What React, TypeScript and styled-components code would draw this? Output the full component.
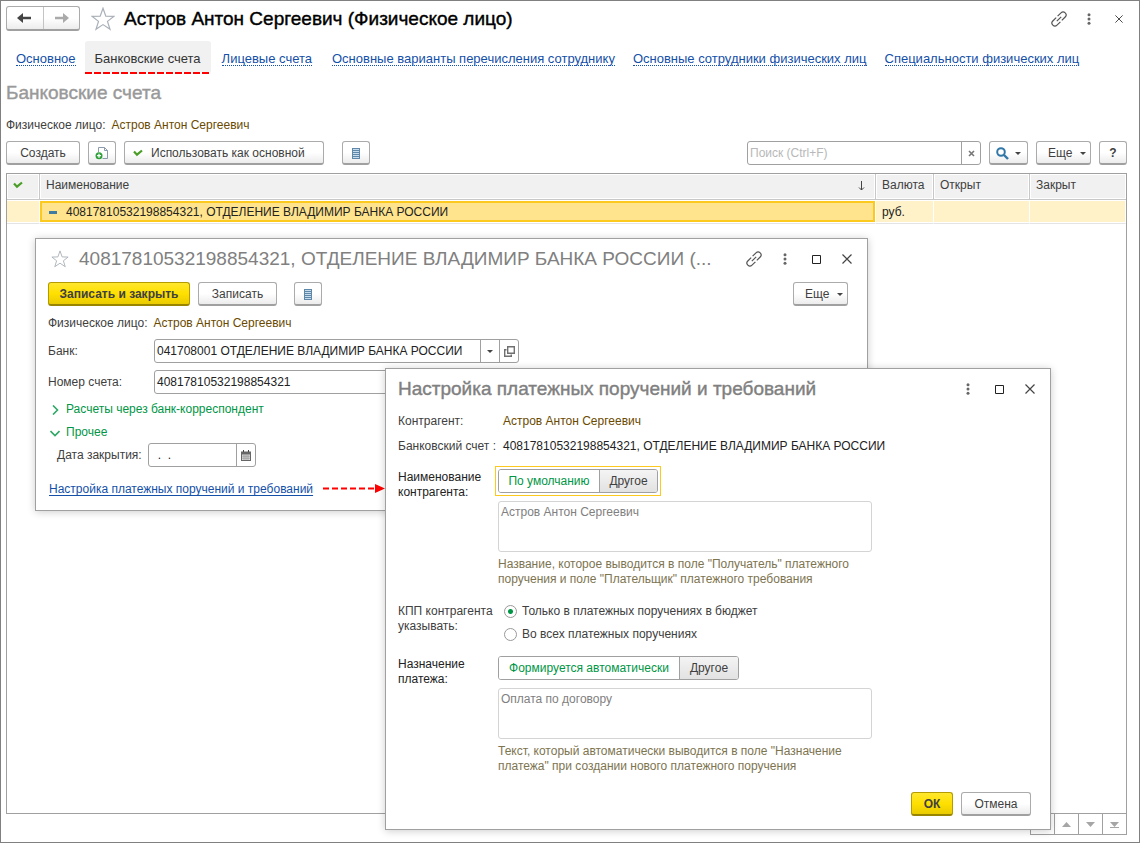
import React, { useState } from 'react';
import styled, { createGlobalStyle, css } from 'styled-components';

const GlobalStyle = createGlobalStyle`
  *, *::before, *::after { box-sizing: border-box; }
  body { margin: 0; background: #fff; }
  body, button, input, textarea {
    font-family: "Liberation Sans", Arial, sans-serif;
    font-size: 12px;
    line-height: 15px;
    color: #404040;
  }
  h1, h2 { margin: 0; font-weight: 400; }
`;

const Page = styled.main`
  position: relative;
  display: flex;
  flex-direction: column;
  min-height: 100vh;
  padding: 5px 12px 7px 5px;
  border: 1px solid #808080;
`;

const Header = styled.header`
  display: flex;
  align-items: center;
  height: 25px;
  margin-right: -4px;
`;

const NavButtons = styled.div`
  display: flex;
  width: 74px;
  height: 25px;
  border: 1px solid #ababab;
  border-bottom: 2px solid #a0a0a0;
  border-radius: 3px;
  background: linear-gradient(#fff 50%, #ececec);
`;

const NavButton = styled.button`
  flex: 1;
  display: flex;
  align-items: center;
  justify-content: center;
  padding: 0;
  border: 0;
  background: none;
  & + & { border-left: 1px solid #c4c4c4; }
`;

const IconButton = styled.button`
  display: flex;
  align-items: center;
  justify-content: center;
  flex: none;
  width: 24px;
  height: 24px;
  padding: 0;
  border: 0;
  background: none;
`;

const PageTitle = styled.h1`
  flex: 1;
  margin-left: 9px;
  font-size: 19px;
  line-height: 24px;
  color: #000;
  -webkit-text-stroke: 0.4px #000;
`;

const WindowTools = styled.div<{ $gap?: number }>`
  display: flex;
  gap: ${(p) => p.$gap ?? 7}px;
`;

const Tabs = styled.nav`
  display: flex;
  align-items: flex-start;
  height: 33px;
  margin-top: 10px;
  padding-left: 10px;
  white-space: nowrap;
`;

const TabLink = styled.a<{ $gap: number }>`
  margin: 11px ${(p) => p.$gap}px 0 0;
  border-bottom: 1px dotted #1450a8;
  font-size: 13px;
  line-height: 13px;
  color: #1450a8;
  text-decoration: none;
`;

const ActiveTab = styled.a`
  height: 33px;
  margin-right: 11px;
  padding: 10px 10px 0;
  border-radius: 3px 3px 0 0;
  background: repeating-linear-gradient(90deg, #f00 0 7px, #fff 7px 9px) bottom / 100% 2px no-repeat, #f1f1f1;
  font-size: 13px;
  color: #333;
  text-decoration: none;
`;

const Section = styled.h2`
  margin-top: 7px;
  font-size: 19px;
  line-height: 24px;
  color: #999;
  -webkit-text-stroke: 0.4px #999;
`;

const Line = styled.div<{ $top?: number }>`
  display: flex;
  gap: 6px;
  margin-top: ${(p) => p.$top ?? 0}px;
`;

const Value = styled.span<{ $dark?: boolean }>`
  color: ${(p) => (p.$dark ? '#222' : '#6b4a00')};
`;

const Toolbar = styled.div<{ $top: number }>`
  display: flex;
  gap: 8px;
  margin-top: ${(p) => p.$top}px;
`;

const Button = styled.button<{ $w?: number; $left?: number; $primary?: boolean }>`
  display: flex;
  flex: none;
  align-items: center;
  justify-content: ${(p) => (p.$left ? 'flex-start' : 'center')};
  gap: ${(p) => (p.$left ? 8 : 6)}px;
  width: ${(p) => p.$w ?? 28}px;
  height: 24px;
  padding: 1px 0 0 ${(p) => p.$left ?? 0}px;
  border: 1px solid #ababab;
  border-bottom: 2px solid #a0a0a0;
  border-radius: 3px;
  background: linear-gradient(#fff 50%, #ececec);
  white-space: nowrap;
  ${(p) =>
    p.$primary &&
    css`
      border-color: #b39b00;
      border-bottom-color: #998500;
      background: linear-gradient(#ffe72e, #ffe000 50%, #eacb00);
      font-weight: 700;
    `}
`;

const Spacer = styled.div<{ $w?: number }>`
  flex: ${(p) => (p.$w ? `0 0 ${p.$w}px` : '1')};
`;

const Field = styled.div<{ $w?: number }>`
  display: flex;
  width: ${(p) => (p.$w ? `${p.$w}px` : 'auto')};
  height: 24px;
  border: 1px solid #a0a0a0;
  border-radius: 3px;
  background: #fff;
  overflow: hidden;
`;

const TextInput = styled.input`
  flex: 1;
  min-width: 0;
  padding: 0 2px;
  border: 0;
  outline: 0;
  background: none;
  color: #222;
  &::placeholder { color: #b8b8b8; opacity: 1; }
`;

const FieldButton = styled.button`
  display: flex;
  align-items: center;
  justify-content: center;
  flex: none;
  width: 19px;
  padding: 0;
  border: 0;
  border-left: 1px solid #a0a0a0;
  background: none;
`;

const ListPanel = styled.section`
  flex: 1;
  margin-top: 8px;
  border: 1px solid #a0a0a0;
`;

const Table = styled.table`
  width: 100%;
  table-layout: fixed;
  border-collapse: separate;
  border-spacing: 0;
`;

const Th = styled.th<{ $w?: number }>`
  width: ${(p) => (p.$w ? `${p.$w}px` : 'auto')};
  height: 26px;
  padding: 0 6px 2px;
  border: 0 solid #c8c8c8;
  border-width: 0 1px 1px 0;
  background: #f1f1f1;
  box-shadow: inset 0 0 0 1px #fff;
  font-weight: 400;
  text-align: left;
  &:last-child { border-right: 0; }
`;

const HeadRow = styled.span`
  display: flex;
  align-items: center;
  justify-content: space-between;
  padding-right: 4px;
`;

const Td = styled.td<{ $active?: boolean }>`
  height: 24px;
  padding: 0 6px;
  border: 0 solid #fff;
  border-width: 1px 1px 1px 0;
  border-bottom-color: #e4e4e4;
  background: #fff2c8;
  box-shadow: inset 0 -1px #fff;
  color: #222;
  ${(p) =>
    p.$active &&
    css`
      background: #ffe48d;
      box-shadow: inset 0 -1px #fff, inset 0 -3px #fcc91f, inset 0 0 0 2px #fcc91f;
      padding-left: 9px;
    `}
`;

const RowName = styled.span`
  display: flex;
  align-items: center;
  gap: 9px;
`;

const Pager = styled.div`
  display: flex;
  align-self: flex-end;
  border: 1px solid #a0a0a0;
  border-top: 0;
`;

const PagerButton = styled.button`
  display: flex;
  align-items: center;
  justify-content: center;
  width: 24px;
  height: 20px;
  padding: 0;
  border: 0;
  background: #fff;
  &:first-child { width: 23px; }
  & + & { border-left: 1px solid #a0a0a0; }
`;

const Dialog = styled.section<{ $x: number; $y: number; $w: number }>`
  position: absolute;
  left: ${(p) => p.$x}px;
  top: ${(p) => p.$y}px;
  width: ${(p) => p.$w}px;
  padding: 8px 8px 13px 12px;
  border: 1px solid #a0a0a0;
  background: #fff;
  box-shadow: 0 1px 8px rgba(0, 0, 0, 0.2);
`;

const DialogHead = styled.header`
  display: flex;
  align-items: center;
  height: 24px;
`;

const DialogTitle = styled.h2<{ $bold?: boolean }>`
  flex: 1;
  min-width: 0;
  white-space: nowrap;
  font-size: 19px;
  line-height: 24px;
  color: #808080;
  ${(p) => p.$bold && css`-webkit-text-stroke: 0.4px #808080;`}
`;

const FormRow = styled.div<{ $top: number; $label: number; $center?: boolean }>`
  display: grid;
  grid-template-columns: ${(p) => p.$label}px 1fr;
  align-items: ${(p) => (p.$center ? 'center' : 'start')};
  margin-top: ${(p) => p.$top}px;
`;

const Label = styled.label<{ $dark?: boolean }>`
  ${(p) => p.$dark && css`padding-top: 1px; color: #222;`}
`;

const GroupToggle = styled.button`
  display: flex;
  align-items: center;
  gap: 6px;
  margin-top: 8px;
  padding: 0 0 0 2px;
  border: 0;
  background: none;
  color: #009646;
`;

const SettingsRow = styled.div`
  display: flex;
  align-items: center;
  justify-content: space-between;
  width: 336px;
  margin: 15px 0 0 1px;
`;

const SettingsLink = styled.a`
  color: #1450a8;
  text-underline-offset: 2px;
  white-space: nowrap;
`;

const FocusFrame = styled.div`
  width: fit-content;
  margin: -3px;
  padding: 2px;
  border: 1px solid #fcc91f;
`;

const Segments = styled.div`
  display: flex;
  width: fit-content;
  height: 24px;
  border: 1px solid #a0a0a0;
  border-radius: 3px;
`;

const Segment = styled.button<{ $w: number; $on?: boolean }>`
  width: ${(p) => p.$w}px;
  padding: 0;
  border: 0;
  border-radius: 2px;
  white-space: nowrap;
  background: ${(p) => (p.$on ? '#fff' : 'linear-gradient(#f4f4f4, #e2e2e2)')};
  color: ${(p) => (p.$on ? '#009646' : '#404040')};
  & + & { border-left: 1px solid #a0a0a0; border-radius: 0 2px 2px 0; }
`;

const Area = styled.textarea`
  display: block;
  width: 374px;
  height: 51px;
  margin-top: 8px;
  padding: 3px 2px;
  border: 1px solid #d4d4d4;
  border-radius: 3px;
  outline: 0;
  resize: none;
  color: #808080;
`;

const Hint = styled.p`
  width: 374px;
  margin: 5px 0 0;
  color: #7d7450;
`;

const RadioLabel = styled.label`
  display: flex;
  align-items: center;
  gap: 5px;
  height: 15px;
  margin: 0 0 8px 6px;
`;

const Radio = styled.input`
  appearance: none;
  width: 13px;
  height: 13px;
  margin: 0;
  border: 1px solid #999;
  border-radius: 50%;
  background: #fff;
  &:checked { background: radial-gradient(circle, #009646 0 2px, #fff 3px); }
`;

const Footer = styled.footer`
  display: flex;
  justify-content: flex-end;
  gap: 8px;
  margin-top: 18px;
`;

const Star = ({ size }: { size: number }) => (
  <svg width={size} height={size} viewBox="0 0 24 24" fill="none" stroke="#a9b0b8" strokeWidth="1.2">
    <path d="M12 1.200l2.800 8 8 .2-6.300 5 2.500 7.900L12 17.600l-7 4.700 2.500-7.900-6.300-5 8-.2z" />
  </svg>
);

const NavArrow = ({ color, flip }: { color: string; flip?: boolean }) => (
  <svg width="15" height="12" viewBox="0 0 15 12">
    <path d={flip ? 'M15 6L9 1v10z' : 'M0 6l6-5v10z'} fill={color} />
    <path d={flip ? 'M1 6h9' : 'M5 6h9'} stroke={color} strokeWidth="2.500" />
  </svg>
);

const LinkIcon = () => (
  <svg width="16" height="16" viewBox="0 0 16 16" fill="none" stroke="#555" strokeWidth="1.200">
    <path d="M6.600 5.200L10 1.800a2.970 2.970 0 0 1 4.200 4.200L10.800 9.400" />
    <path d="M9.400 10.800L6 14.200a2.970 2.970 0 0 1-4.200-4.200L5.200 6.600" />
    <path d="M5.800 10.200l4.400-4.400" />
  </svg>
);

const DotsIcon = () => (
  <svg width="4" height="12" viewBox="0 0 4 12" fill="#666">
    <circle cx="2" cy="1.700" r="1.500" />
    <circle cx="2" cy="6" r="1.500" />
    <circle cx="2" cy="10.300" r="1.500" />
  </svg>
);

const CloseIcon = ({ size }: { size: number }) => (
  <svg width={size} height={size} viewBox="0 0 10 10" stroke="#444" strokeWidth="1.200">
    <path d="M.5.5l9 9M9.500.5l-9 9" />
  </svg>
);

const ClearIcon = () => (
  <svg width="7" height="7" viewBox="0 0 7 7" stroke="#777" strokeWidth="1.600">
    <path d="M1 1l5 5M6 1L1 6" />
  </svg>
);

const SquareIcon = () => (
  <svg width="9" height="9" viewBox="0 0 9 9" fill="none" stroke="#222">
    <path d="M.5.500h8v8h-8z" />
  </svg>
);

const CheckIcon = () => (
  <svg width="10" height="8" viewBox="0 0 10 8" fill="none" stroke="#4a9e28" strokeWidth="2.200">
    <path d="M1 2.500l3 3.200L9 1.500" />
  </svg>
);

const ListIcon = () => (
  <svg width="8" height="11" viewBox="0 0 8 11">
    <path d="M0 0h8v11H0z" fill="#5f87a8" />
    <path d="M1 1.500h6M1 3.500h6M1 5.500h6M1 7.500h6M1 9.500h6" stroke="#c7dcec" />
  </svg>
);

const CopyDocIcon = () => (
  <svg width="14" height="14" viewBox="0 0 14 14" fill="none">
    <path d="M3.500 6V1.500h6l3 3v8H7.500" stroke="#8b9bab" />
    <path d="M9.500 1.500v3h3" stroke="#8b9bab" />
    <circle cx="4" cy="9.700" r="3.500" fill="#2fa03a" />
    <path d="M4 7.700v4M2 9.700h4" stroke="#fff" strokeWidth="1.300" />
  </svg>
);

const Caret = () => (
  <svg width="6" height="3" viewBox="0 0 6 3" fill="#444">
    <path d="M0 0h6L3 3z" />
  </svg>
);

const PagerIcon = ({ up, bar }: { up?: boolean; bar?: boolean }) => (
  <svg width="9" height="7" viewBox="0 0 9 7" fill="#a6a6a6">
    <path d={up ? 'M0 6l4.500-5L9 6z' : 'M0 1h9L4.500 6z'} />
    {bar && <path d={up ? 'M0 0h9v1H0z' : 'M0 6h9v1H0z'} />}
  </svg>
);

const SearchIcon = () => (
  <svg width="13" height="13" viewBox="0 0 13 13" fill="none" stroke="#3178a8">
    <circle cx="5" cy="5" r="3.800" strokeWidth="2" />
    <path d="M8 8l4 4" strokeWidth="2.400" />
  </svg>
);

const SortIcon = () => (
  <svg width="7" height="10" viewBox="0 0 7 10" fill="none" stroke="#444">
    <path d="M3.500 0v9M1 6.500L3.500 9 6 6.500" />
  </svg>
);

const OpenIcon = () => (
  <svg width="11" height="11" viewBox="0 0 11 11" fill="none" stroke="#707070" strokeWidth="1.400">
    <path d="M3.700 .7h6.600v6.600H3.700zM2.500 3.700H.7v6.600h6.600V8.500" />
  </svg>
);

const CalendarIcon = () => (
  <svg width="10" height="11" viewBox="0 0 10 11">
    <path d="M0 1.500h10V11H0z" fill="#666" />
    <path d="M2 0h1v2H2zM7 0h1v2H7z" fill="#444" />
    <path d="M1 4.500h8V10H1z" fill="#ddd" />
    <path d="M1 6.200h8M1 8.200h8M3 4.500V10M5 4.500V10M7 4.500V10" stroke="#888" strokeWidth=".6" />
  </svg>
);

const Chevron = ({ down }: { down?: boolean }) => (
  <svg width="10" height="10" viewBox="0 0 10 10" fill="none" stroke="#2fa866" strokeWidth="1.600">
    <path d={down ? 'M.5 3L5 7.500 9.500 3' : 'M3 .5L7.500 5 3 9.500'} />
  </svg>
);

const DashedArrow = () => (
  <svg width="62" height="11" viewBox="0 0 62 11">
    <path d="M0 4.500h53" stroke="#f00" strokeWidth="2" strokeDasharray="6 3" />
    <path d="M52 0l10 4.500L52 9z" fill="#f00" />
  </svg>
);

const MoreButton = () => (
  <Button $w={55} $left={11}>
    Еще
    <Caret />
  </Button>
);

export default function App() {
  const [kpp, setKpp] = useState('budget');
  const account = '40817810532198854321, ОТДЕЛЕНИЕ ВЛАДИМИР БАНКА РОССИИ';

  return (
    <>
      <GlobalStyle />
      <Page>
        <Header>
          <NavButtons>
            <NavButton aria-label="Назад"><NavArrow color="#444" /></NavButton>
            <NavButton aria-label="Вперед"><NavArrow color="#aaa" flip /></NavButton>
          </NavButtons>
          <Spacer $w={11} />
          <IconButton aria-label="В избранное"><Star size={24} /></IconButton>
          <PageTitle>Астров Антон Сергеевич (Физическое лицо)</PageTitle>
          <WindowTools $gap={6}>
            <IconButton aria-label="Ссылка"><LinkIcon /></IconButton>
            <IconButton aria-label="Меню"><DotsIcon /></IconButton>
            <IconButton aria-label="Закрыть"><CloseIcon size={8} /></IconButton>
          </WindowTools>
        </Header>

        <Tabs>
          <TabLink href="#main" $gap={9}>Основное</TabLink>
          <ActiveTab href="#accounts">Банковские счета</ActiveTab>
          <TabLink href="#personal" $gap={20}>Лицевые счета</TabLink>
          <TabLink href="#transfer" $gap={18}>Основные варианты перечисления сотруднику</TabLink>
          <TabLink href="#staff" $gap={18}>Основные сотрудники физических лиц</TabLink>
          <TabLink href="#skills" $gap={0}>Специальности физических лиц</TabLink>
        </Tabs>

        <Section>Банковские счета</Section>
        <Line $top={13}>
          <span>Физическое лицо:</span>
          <Value>Астров Антон Сергеевич</Value>
        </Line>

        <Toolbar $top={8}>
          <Button $w={74}>Создать</Button>
          <Button aria-label="Скопировать"><CopyDocIcon /></Button>
          <Button $w={200} $left={8}><CheckIcon />Использовать как основной</Button>
          <Spacer $w={2} />
          <Button aria-label="Список"><ListIcon /></Button>
          <Spacer />
          <Field $w={234}>
            <TextInput aria-label="Поиск" placeholder="Поиск (Ctrl+F)" />
            <FieldButton aria-label="Очистить"><ClearIcon /></FieldButton>
          </Field>
          <Button $w={39} aria-label="Найти"><SearchIcon /><Caret /></Button>
          <MoreButton />
          <Button><b>?</b></Button>
        </Toolbar>

        <ListPanel>
          <Table>
            <thead>
              <tr>
                <Th $w={33} aria-label="Основной"><CheckIcon /></Th>
                <Th><HeadRow>Наименование <SortIcon /></HeadRow></Th>
                <Th $w={58}>Валюта</Th>
                <Th $w={96}>Открыт</Th>
                <Th $w={96}>Закрыт</Th>
              </tr>
            </thead>
            <tbody>
              <tr>
                <Td />
                <Td $active>
                  <RowName>
                    <svg width="8" height="3" viewBox="0 0 8 3"><path d="M0 0h8v3H0z" fill="#3f7ba0" /></svg>
                    {account}
                  </RowName>
                </Td>
                <Td>руб.</Td>
                <Td />
                <Td />
              </tr>
            </tbody>
          </Table>
        </ListPanel>
        <Pager>
          <PagerButton aria-label="В начало"><PagerIcon up bar /></PagerButton>
          <PagerButton aria-label="Вверх"><PagerIcon up /></PagerButton>
          <PagerButton aria-label="Вниз"><PagerIcon /></PagerButton>
          <PagerButton aria-label="В конец"><PagerIcon bar /></PagerButton>
        </Pager>

        <Dialog $x={34} $y={237} $w={833}>
          <DialogHead>
            <IconButton aria-label="В избранное"><Star size={18} /></IconButton>
            <Spacer $w={7} />
            <DialogTitle>{account} (...</DialogTitle>
            <WindowTools>
              <IconButton aria-label="Ссылка"><LinkIcon /></IconButton>
              <IconButton aria-label="Меню"><DotsIcon /></IconButton>
              <IconButton aria-label="Развернуть"><SquareIcon /></IconButton>
              <IconButton aria-label="Закрыть"><CloseIcon size={10} /></IconButton>
            </WindowTools>
          </DialogHead>
          <Toolbar $top={11}>
            <Button $w={142} $primary>Записать и закрыть</Button>
            <Button $w={79}>Записать</Button>
            <Spacer $w={1} />
            <Button aria-label="Список"><ListIcon /></Button>
            <Spacer />
            <MoreButton />
            <Spacer $w={3} />
          </Toolbar>
          <Line $top={10}>
            <span>Физическое лицо:</span>
            <Value>Астров Антон Сергеевич</Value>
          </Line>
          <FormRow $top={8} $label={106} $center>
            <Label htmlFor="bank">Банк:</Label>
            <Field $w={365}>
              <TextInput id="bank" defaultValue="041708001 ОТДЕЛЕНИЕ ВЛАДИМИР БАНКА РОССИИ" />
              <FieldButton aria-label="Выбрать"><Caret /></FieldButton>
              <FieldButton aria-label="Открыть"><OpenIcon /></FieldButton>
            </Field>
          </FormRow>
          <FormRow $top={7} $label={106} $center>
            <Label htmlFor="number">Номер счета:</Label>
            <Field $w={365}>
              <TextInput id="number" defaultValue="40817810532198854321" />
            </Field>
          </FormRow>
          <GroupToggle><Chevron />Расчеты через банк-корреспондент</GroupToggle>
          <GroupToggle><Chevron down />Прочее</GroupToggle>
          <FormRow $top={3} $label={100} $center>
            <Label htmlFor="closed"><RowName><span />Дата закрытия:</RowName></Label>
            <Field $w={108}>
              <TextInput id="closed" defaultValue="  .  ." />
              <FieldButton aria-label="Календарь"><CalendarIcon /></FieldButton>
            </Field>
          </FormRow>
          <SettingsRow>
            <SettingsLink href="#settings">Настройка платежных поручений и требований</SettingsLink>
            <DashedArrow />
          </SettingsRow>
        </Dialog>

        <Dialog $x={384} $y={367} $w={666}>
          <DialogHead>
            <DialogTitle $bold>Настройка платежных поручений и требований</DialogTitle>
            <WindowTools>
              <IconButton aria-label="Меню"><DotsIcon /></IconButton>
              <IconButton aria-label="Развернуть"><SquareIcon /></IconButton>
              <IconButton aria-label="Закрыть"><CloseIcon size={10} /></IconButton>
            </WindowTools>
          </DialogHead>
          <FormRow $top={13} $label={105}>
            <span>Контрагент:</span>
            <Value>Астров Антон Сергеевич</Value>
          </FormRow>
          <FormRow $top={10} $label={105}>
            <span>Банковский счет :</span>
            <Value $dark>{account}</Value>
          </FormRow>
          <FormRow $top={15} $label={100}>
            <Label htmlFor="name" $dark>Наименование контрагента:</Label>
            <div>
              <FocusFrame>
                <Segments>
                  <Segment $w={100} $on>По умолчанию</Segment>
                  <Segment $w={58}>Другое</Segment>
                </Segments>
              </FocusFrame>
              <Area id="name" defaultValue="Астров Антон Сергеевич" />
              <Hint>Название, которое выводится в поле "Получатель" платежного поручения и поле "Плательщик" платежного требования</Hint>
            </div>
          </FormRow>
          <FormRow $top={17} $label={100}>
            <span>КПП контрагента указывать:</span>
            <div>
              <RadioLabel>
                <Radio type="radio" name="kpp" checked={kpp === 'budget'} onChange={() => setKpp('budget')} />
                Только в платежных поручениях в бюджет
              </RadioLabel>
              <RadioLabel>
                <Radio type="radio" name="kpp" checked={kpp === 'all'} onChange={() => setKpp('all')} />
                Во всех платежных поручениях
              </RadioLabel>
            </div>
          </FormRow>
          <FormRow $top={6} $label={100}>
            <Label htmlFor="purpose" $dark>Назначение платежа:</Label>
            <div>
              <Segments>
                <Segment $w={180} $on>Формируется автоматически</Segment>
                <Segment $w={59}>Другое</Segment>
              </Segments>
              <Area id="purpose" defaultValue="Оплата по договору" />
              <Hint>Текст, который автоматически выводится в поле "Назначение платежа" при создании нового платежного поручения</Hint>
            </div>
          </FormRow>
          <Footer>
            <Button $w={42} $primary>ОК</Button>
            <Button $w={70}>Отмена</Button>
            <Spacer $w={3} />
          </Footer>
        </Dialog>
      </Page>
    </>
  );
}
